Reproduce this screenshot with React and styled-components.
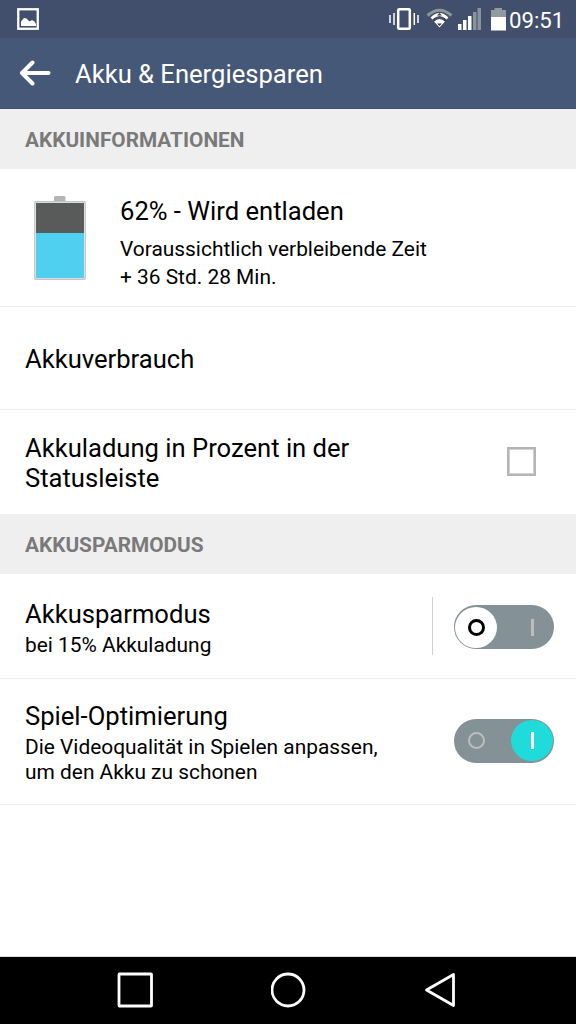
import styled, { createGlobalStyle } from 'styled-components';

const GlobalStyle = createGlobalStyle`
  body {
    margin: 0;
    background: #ffffff;
  }

  * {
    box-sizing: border-box;
  }
`;

const Screen = styled.div`
  display: flex;
  flex-direction: column;
  width: 576px;
  height: 1024px;
  overflow: hidden;
  background: #ffffff;
  color: #000000;
  font-family: Roboto, sans-serif;
`;

const StatusBar = styled.div`
  display: flex;
  align-items: center;
  justify-content: space-between;
  height: 38px;
  flex: none;
  padding: 0 11px 0 17px;
  background: #414f6d;
`;

const StatusIcons = styled.div`
  display: flex;
  align-items: center;
`;

const Clock = styled.span`
  width: 56px;
  margin-left: 3px;
  padding-top: 2px;
  color: #ffffff;
  font-size: 22.2px;
  line-height: 28px;
  white-space: nowrap;
`;

const AppBar = styled.header`
  display: flex;
  align-items: center;
  height: 71px;
  flex: none;
  padding-left: 19px;
  gap: 24px;
  background: #465878;
  border-bottom: 1px solid #3d5074;
`;

const Title = styled.h1`
  margin: 0;
  padding-top: 2px;
  color: #ffffff;
  font-size: 25.6px;
  font-weight: 400;
  line-height: 32px;
`;

const SectionHeader = styled.h2`
  display: flex;
  align-items: center;
  height: 60px;
  flex: none;
  margin: 0;
  padding: 2px 0 0 25px;
  background: #efefef;
  color: #7a7a7a;
  font-size: 20.8px;
  font-weight: 700;
  line-height: 24px;
`;

const Row = styled.div`
  display: flex;
  align-items: center;
  height: ${(p) => p.$height}px;
  flex: none;
  padding: ${(p) => p.$padding || '0 22px 0 25px'};
  border-bottom: ${(p) => (p.$last ? 'none' : '1px solid #ececec')};
`;

const Texts = styled.div`
  flex: 1;
  padding-top: ${(p) => p.$top || 0}px;
  margin-left: ${(p) => p.$indent || 0}px;
  white-space: nowrap;
`;

const Label = styled.div`
  margin: -1px 0 1px;
  font-size: 25.6px;
  line-height: 30px;
`;

const Detail = styled.div`
  padding-top: ${(p) => p.$gap || 0}px;
  font-size: 20.9px;
  line-height: ${(p) => p.$line || 25}px;
`;

const Checkbox = styled.div`
  width: 29px;
  height: 29px;
  margin: 0 18px 2px 0;
  border: 2px solid #b5b5b5;
  box-shadow: inset 0 0 0 1px #d2d2d2;
`;

const Divider = styled.div`
  width: 1px;
  height: 58px;
  margin-right: 21px;
  background: #cfcfcf;
`;

const Track = styled.div`
  display: flex;
  align-items: center;
  justify-content: space-between;
  width: 100px;
  height: 44px;
  margin: ${(p) => (p.$on ? '0 0 2px' : '2px 0 0')};
  padding: 0 1px;
  border-radius: 22px;
  background: #849197;
`;

const Knob = styled.div`
  display: flex;
  align-items: center;
  justify-content: center;
  width: 42px;
  height: 41px;
  border-radius: 50%;
  background: ${(p) => p.$fill || 'transparent'};
`;

const Ring = styled.span`
  width: 17px;
  height: 17px;
  border: ${(p) => p.$weight}px solid ${(p) => p.$color};
  border-radius: 50%;
`;

const Bar = styled.span`
  width: 3px;
  height: 17px;
  background: ${(p) => p.$color};
`;

const NavBar = styled.nav`
  display: flex;
  align-items: center;
  justify-content: space-between;
  height: 68px;
  margin-top: auto;
  flex: none;
  padding: 0 120px 2px 117px;
  background: #000000;
  border-top: 1px solid #dcdfe0;
`;

function Toggle({ on }) {
  return (
    <Track $on={on}>
      <Knob $fill={on ? undefined : '#ffffff'}>
        <Ring $weight={on ? 2 : 3} $color={on ? '#bdbdbd' : '#000000'} />
      </Knob>
      <Knob $fill={on ? '#1fdbda' : undefined}>
        <Bar $color={on ? '#ffffff' : '#bdbdbd'} />
      </Knob>
    </Track>
  );
}

function PictureIcon() {
  return (
    <svg width="22" height="22" viewBox="0 0 22 22">
      <rect x="1.25" y="1.25" width="19.5" height="19.5" fill="none" stroke="#fff" strokeWidth="2.3" />
      <path d="M4 18v-4.500l3-3.500 2.500.5 3 3 2.500-1.500 2.500 1.500 1.500 2.500v2z" fill="#fff" />
    </svg>
  );
}

function StatusGlyphs() {
  return (
    <svg width="118" height="26" viewBox="388 6 118 26">
      {/* vibrate */}
      <rect x="398.2" y="9.2" width="11.6" height="19.6" rx="1" fill="none" stroke="#fff" strokeWidth="2.5" />
      <path d="M390 15v8M394 13v12M414.300 13v12M418 15v8" stroke="#fff" strokeWidth="1.5" />
      {/* wifi */}
      <path d="M427.500 15.500Q439.500 5 451.500 15.500" fill="none" stroke="#8d969b" strokeWidth="3" />
      <path d="M431.500 18.500Q439.500 10.500 447.500 18.500" fill="none" stroke="#fff" strokeWidth="2.800" />
      <path d="M434 21.500Q439.500 16.500 445 21.500L439.500 27.500z" fill="#fff" />
      <path d="M437 15.500l2.500-2.500 2.500 2.500zM437 23.500l2.500 2.500 2.500-2.500z" fill="#3b3d40" />
      <path d="M434.500 18v3M444.500 18v3" stroke="#3b3d40" strokeWidth="1.300" />
      {/* signal */}
      <path d="M458 24h3.500v6H458zM463 20h3.500v10H463zM468 16h3.500v14H468z" fill="#fff" />
      <path d="M473 12h3.500v18H473zM477.500 8h3.500v22h-3.500z" fill="#8a9399" />
      {/* battery */}
      <path d="M491 10h3.500V8h7.500v2h4v8h-15z" fill="#929a9e" />
      <path d="M491 17h15v13.500h-15z" fill="#fff" />
    </svg>
  );
}

function BackArrow() {
  return (
    <svg width="32" height="26" viewBox="0 0 32 26">
      <path d="M13.500 2.500L3 13L13.500 23.500M3 13H29.500" fill="none" stroke="#fff" strokeWidth="4" strokeLinecap="round" strokeLinejoin="round" />
    </svg>
  );
}

function BatteryIcon() {
  return (
    <svg width="52" height="84" viewBox="0 0 52 84">
      <path d="M20 6V1.500Q20 0 21.500 0H30Q31.500 0 31.500 1.500V6z" fill="#b4b4b4" />
      <rect x="0.750" y="5.750" width="50.500" height="77.500" rx="1" fill="#f4f4f4" stroke="#c4c4c4" strokeWidth="1.300" />
      <rect x="2" y="7" width="48" height="30" fill="#595b5b" />
      <rect x="2" y="37" width="48" height="45" fill="#50d0f1" />
    </svg>
  );
}

export default function App() {
  return (
    <Screen>
      <GlobalStyle />
      <StatusBar>
        <PictureIcon />
        <StatusIcons>
          <StatusGlyphs />
          <Clock>09:51</Clock>
        </StatusIcons>
      </StatusBar>
      <AppBar>
        <BackArrow />
        <Title>Akku &amp; Energiesparen</Title>
      </AppBar>

      <SectionHeader>AKKUINFORMATIONEN</SectionHeader>
      <Row $height={138} $padding="0 22px 0 34px">
        <BatteryIcon />
        <Texts $top={13} $indent={34}>
          <Label>62% - Wird entladen</Label>
          <Detail $gap={8} $line={28}>
            Voraussichtlich verbleibende Zeit
            <br />+ 36 Std. 28 Min.
          </Detail>
        </Texts>
      </Row>
      <Row $height={103}>
        <Texts $top={3}>
          <Label>Akkuverbrauch</Label>
        </Texts>
      </Row>
      <Row $height={104} $last>
        <Texts $top={3}>
          <Label>
            Akkuladung in Prozent in der
            <br />
            Statusleiste
          </Label>
        </Texts>
        <Checkbox />
      </Row>

      <SectionHeader>AKKUSPARMODUS</SectionHeader>
      <Row $height={105}>
        <Texts $top={5}>
          <Label>Akkusparmodus</Label>
          <Detail $gap={3}>bei 15% Akkuladung</Detail>
        </Texts>
        <Divider />
        <Toggle />
      </Row>
      <Row $height={126}>
        <Texts $top={3}>
          <Label>Spiel-Optimierung</Label>
          <Detail $gap={3}>
            Die Videoqualität in Spielen anpassen,
            <br />
            um den Akku zu schonen
          </Detail>
        </Texts>
        <Toggle on />
      </Row>

      <NavBar>
        <svg width="36" height="36" viewBox="0 0 36 36">
          <rect x="2" y="2" width="32.500" height="32" rx="0.500" fill="none" stroke="#fff" strokeWidth="2.800" />
        </svg>
        <svg width="36" height="36" viewBox="0 0 36 36">
          <circle cx="17" cy="18" r="16" fill="none" stroke="#fff" strokeWidth="2.800" />
        </svg>
        <svg width="32" height="36" viewBox="0 0 32 36">
          <path d="M2.500 18L29.500 2.500V33.500z" fill="none" stroke="#fff" strokeWidth="2.800" strokeLinejoin="round" />
        </svg>
      </NavBar>
    </Screen>
  );
}
